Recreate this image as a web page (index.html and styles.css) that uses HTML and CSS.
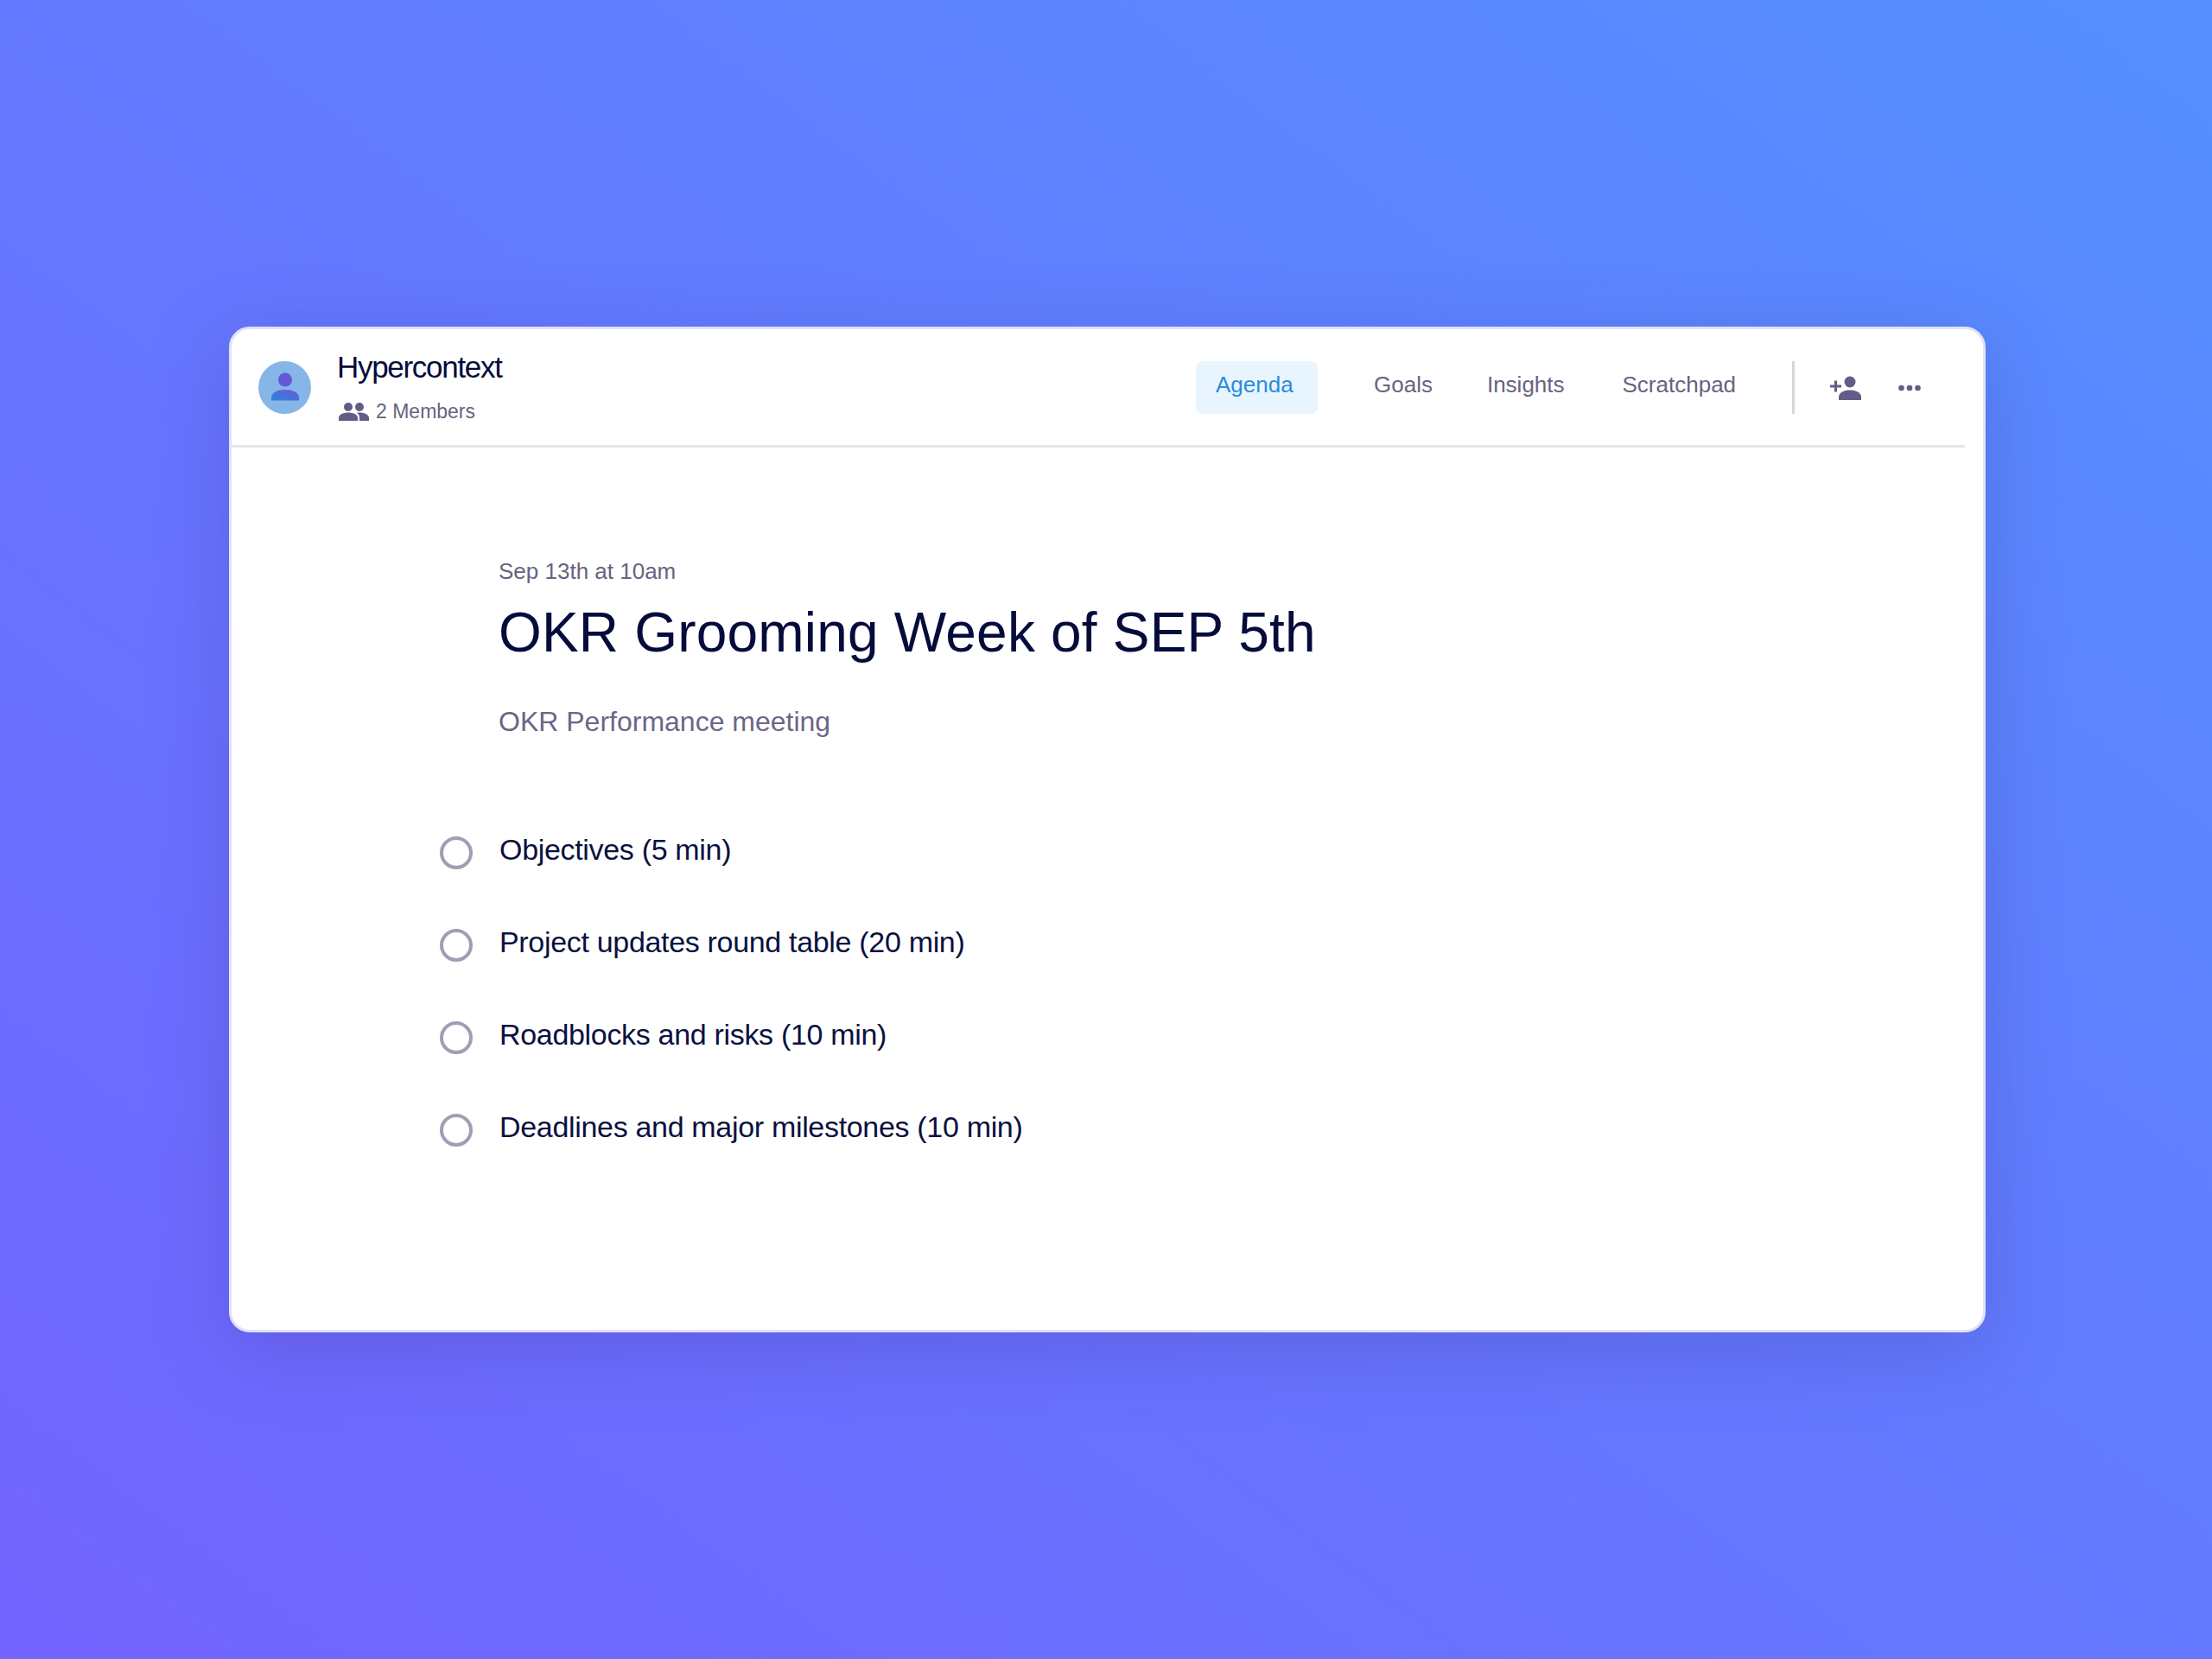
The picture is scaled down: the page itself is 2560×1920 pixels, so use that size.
FILE: index.html
```html
<!DOCTYPE html>
<html lang="en">
<head>
<meta charset="utf-8">
<title>Hypercontext</title>
<link rel="stylesheet" href="styles.css">
</head>
<body>
<main class="card">
  <header class="topbar">
    <div class="avatar">
      <svg class="avatar-icon" viewBox="0 0 34 34" width="34" height="34">
        <defs><linearGradient id="ag" x1="0" y1="1" x2="1" y2="0"><stop offset="0" stop-color="#2d86dc"/><stop offset="1" stop-color="#6a58d8"/></linearGradient></defs>
        <circle cx="17" cy="8.5" r="8" fill="#6558d8"/>
        <path d="M1 32.500v-3.500C1 23 9 20 17 20s16 3 16 9v3.500z" fill="url(#ag)"/>
      </svg>
    </div>
    <div class="team">
      <div class="team-name">Hypercontext</div>
      <div class="team-members">
        <svg class="members-icon" viewBox="0 0 35 22" width="35" height="22"><circle cx="11" cy="6" r="5" fill="#625d85"/><circle cx="24" cy="6" r="5" fill="#625d85"/><path d="M0 22v-3.500C0 14.500 6 12.500 11 12.500s11 2 11 6V22z" fill="#625d85"/><path d="M24 12.500c5 0 11 2 11 6V22H24v-4c0-2.200-1-4-3-5 1-.4 2-.5 3-.5z" fill="#625d85"/></svg>
        <span>2 Members</span>
      </div>
    </div>
    <nav class="tabs">
      <a class="tab tab-active">Agenda</a>
      <a class="tab tab-goals">Goals</a>
      <a class="tab tab-insights">Insights</a>
      <a class="tab tab-scratch">Scratchpad</a>
    </nav>
    <div class="actions">
      <svg class="add-icon" viewBox="0 0 36 28" width="36" height="28"><circle cx="23" cy="7" r="6.500" fill="#625d85"/><path d="M10 28v-3.500C10 19 17 16.500 23 16.500s13 2.500 13 8V28z" fill="#625d85"/><path d="M0 10.500h5v-5h3v5h5v3H8v5H5v-5H0z" fill="#625d85"/></svg>
      <svg class="more-icon" viewBox="0 0 26 8" width="26" height="8"><circle cx="3.500" cy="4" r="3.300" fill="#625d85"/><circle cx="13" cy="4" r="3.300" fill="#625d85"/><circle cx="22.500" cy="4" r="3.300" fill="#625d85"/></svg>
    </div>
  </header>
  <section class="content">
    <div class="date">Sep 13th at 10am</div>
    <h1 class="title">OKR Grooming Week of SEP 5th</h1>
    <p class="subtitle">OKR Performance meeting</p>
    <ul class="agenda">
      <li class="item"><span class="radio"></span><span>Objectives (5 min)</span></li>
      <li class="item"><span class="radio"></span><span>Project updates round table (20 min)</span></li>
      <li class="item"><span class="radio"></span><span>Roadblocks and risks (10 min)</span></li>
      <li class="item"><span class="radio"></span><span>Deadlines and major milestones (10 min)</span></li>
    </ul>
  </section>
</main>
</body>
</html>
```
FILE: styles.css
```css
* { box-sizing: border-box; }
html, body { margin: 0; height: 100%; }
body {
  width: 2560px;
  height: 1920px;
  padding: 378px 262px 0 265px;
  background: linear-gradient(217deg, #5590ff 0%, #6479ff 50%, #7364ff 100%);
  font-family: "Liberation Sans", Arial, sans-serif;
  overflow: hidden;
}
.card {
  width: 2033px;
  height: 1164px;
  background: #fff;
  border: 3px solid #e1e2f4;
  border-radius: 24px;
  box-shadow: 0 20px 90px rgba(60, 50, 150, 0.28);
}
.topbar {
  display: flex;
  align-items: center;
  width: 2006px;
  height: 137px;
  border-bottom: 3px solid #e6e7ec;
  padding: 0 0 0 31px;
}
.avatar {
  width: 61px;
  height: 61px;
  border-radius: 50%;
  background: #86b5e8;
  display: flex;
  align-items: center;
  justify-content: center;
  flex: none;
}
.avatar-icon { display: block; }
.team { margin-left: 30px; width: 994px; padding-bottom: 2px; flex: none; }
.team-name {
  font-size: 35px;
  line-height: 40px;
  letter-spacing: -1.3px;
  color: #050c3c;
}
.team-members {
  display: flex;
  align-items: center;
  gap: 8px;
  margin-top: 17px;
  font-size: 23px;
  line-height: 28px;
  color: #67647f;
}
.members-icon { margin-left: 2px; }
.tabs { display: flex; align-items: center; font-size: 26px; color: #67647f; }
.tab { display: block; height: 61px; line-height: 54px; flex: none; }
.tab-active {
  width: 141px;
  padding-left: 23px;
  background: #e8f5fe;
  border-radius: 8px;
  color: #2a8cdf;
}
.tab-goals { margin-left: 65px; }
.tab-insights { margin-left: 63px; }
.tab-scratch { margin-left: 67px; }
.actions {
  display: flex;
  align-items: center;
  height: 61px;
  margin-left: 65px;
  padding-left: 41px;
  border-left: 3px solid #d5d6de;
  gap: 43px;
}
.add-icon, .more-icon { margin-top: 2px; }
.content { padding: 127px 0 0 309px; }
.date { font-size: 26px; line-height: 32px; color: #67647f; }
.title {
  margin: 17px 0 0;
  font-size: 64px;
  line-height: 76px;
  font-weight: 400;
  letter-spacing: 0.2px;
  color: #050c3c;
}
.subtitle { margin: 45px 0 0; font-size: 32px; line-height: 40px; color: #6a6787; }
.agenda { list-style: none; margin: 75px 0 0 -68px; padding: 0; }
.item {
  display: flex;
  align-items: center;
  height: 107px;
  font-size: 34px;
  letter-spacing: -0.32px;
  color: #0a1140;
}
.radio {
  width: 38px;
  height: 38px;
  border: 4px solid #a09eb4;
  border-radius: 50%;
  margin-top: 6px;
  margin-right: 31px;
  flex: none;
}
```
